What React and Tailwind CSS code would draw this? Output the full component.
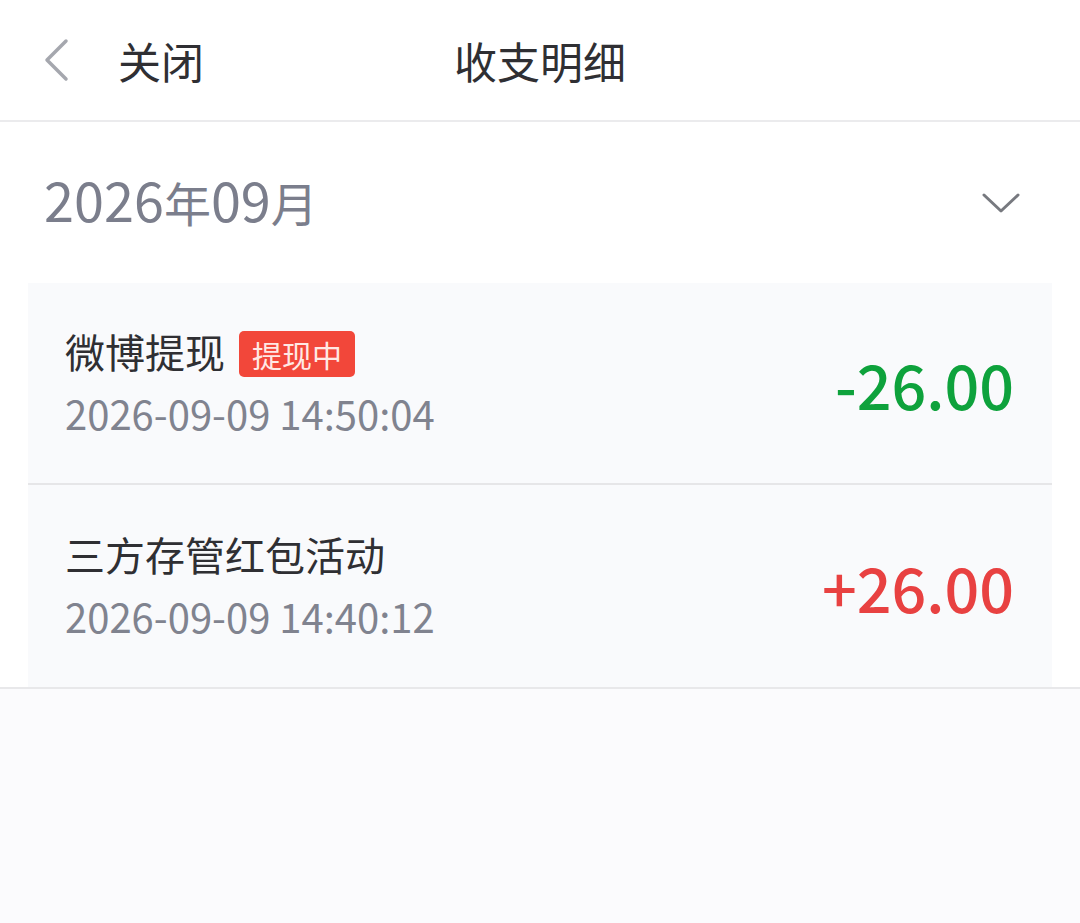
import React from "react";

const font = { fontFamily: '"Noto Sans CJK SC", "Noto Sans", sans-serif' };

function Row({ title, badge, date, amount, positive, border }) {
  return (
    <div className={`flex items-center justify-between h-[202px] pl-[37px] pr-[38px] ${border ? "border-b-2 border-[#e6e6e8]" : ""}`}>
      <div className="flex flex-col pb-[5px]">
        <div className="flex items-center h-[46px]">
          <span className="text-[40px] leading-none text-[#2f2f33]">{title}</span>
          {badge && (
            <span className="ml-[14px] mt-[6px] h-[46px] px-[13px] flex items-center rounded-[5px] bg-[#f2473a] text-[#ffe8e4] text-[30px] leading-none">{badge}</span>
          )}
        </div>
        <div className="mt-[19px] text-[40px] leading-none text-[#80838f]">{date}</div>
      </div>
      <div className={`text-[61px] font-medium leading-none ${positive ? "text-[#e84141]" : "text-[#0ea23c]"}`}>{amount}</div>
    </div>
  );
}

export default function App() {
  return (
    <div className="w-[1080px] h-[923px] bg-[#fbfbfd] flex flex-col" style={font}>
      <div className="relative h-[122px] bg-white border-b-2 border-[#ebebed] flex items-center shrink-0">
        <div className="flex items-center pl-[42px]">
          <svg width="28" height="44" viewBox="0 0 28 44" fill="none">
            <path d="M24 3 L5 22 L24 41" stroke="#a5a7ae" strokeWidth="3.5" strokeLinecap="round" strokeLinejoin="round" />
          </svg>
          <span className="ml-[48px] text-[43px] leading-none text-[#2f2f33]">关闭</span>
        </div>
        <div className="absolute left-0 right-0 text-center text-[43px] leading-none text-[#2f2f33] pointer-events-none">收支明细</div>
      </div>
      <div className="bg-white flex items-center justify-between h-[161px] pl-[44px] pr-[60px] shrink-0">
        <span className="text-[#7b7e8c] leading-none flex items-baseline pb-[8px]">
          <span className="text-[54px]">2026</span>
          <span className="text-[47px]">年</span>
          <span className="text-[54px]">09</span>
          <span className="text-[47px]">月</span>
        </span>
        <svg width="38" height="22" viewBox="0 0 38 22" fill="none">
          <path d="M2 3 L19 19 L36 3" stroke="#77797f" strokeWidth="3" strokeLinecap="round" strokeLinejoin="round" />
        </svg>
      </div>
      <div className="bg-white border-b-2 border-[#e8e8ea]">
        <div className="mx-[28px] bg-[#f9fafc]">
          <Row title="微博提现" badge="提现中" date="2026-09-09 14:50:04" amount="-26.00" border />
          <Row title="三方存管红包活动" date="2026-09-09 14:40:12" amount="+26.00" positive />
        </div>
      </div>
      <div className="flex-1" />
    </div>
  );
}
